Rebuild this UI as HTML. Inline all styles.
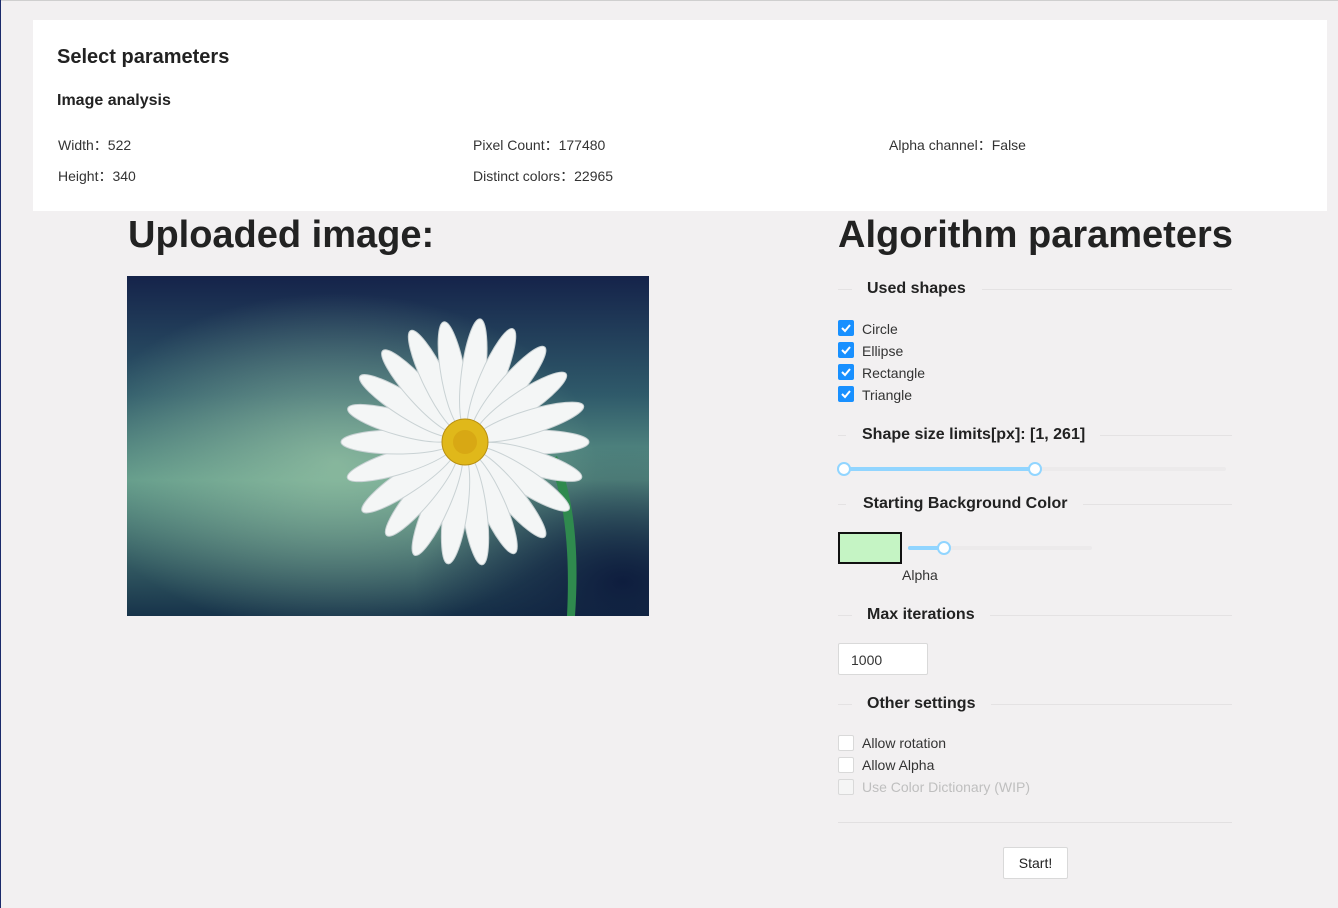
<!DOCTYPE html>
<html><head><meta charset="utf-8"><style>
*{margin:0;padding:0;box-sizing:border-box}
body{width:1338px;height:908px;background:#f2f0f1;font-family:"Liberation Sans",Arial,sans-serif;color:#222;position:relative;overflow:hidden}
.a{position:absolute;white-space:nowrap}
.card{position:absolute;left:33px;top:20px;width:1294px;height:191px;background:#fff}
.lbl{font-size:14px;color:#333}
.sec{position:absolute;left:838px;width:394px;height:20px}
.sec .ln{position:absolute;top:9px;height:1px;background:#e4e2e3}
.sec .t{position:absolute;top:0;font-size:16px;font-weight:bold;color:#222}
.cb{position:absolute;left:838px;width:16px;height:16px;border-radius:2px}
.cb.on{background:#1890ff}
.cb.off{background:#fff;border:1px solid #d9d9d9}
.cbt{position:absolute;left:862px;font-size:14px;color:#333}
</style></head><body>
<div class="a" style="left:0;top:0;width:1338px;height:1px;background:#cfcfcf"></div>
<div class="a" style="left:0;top:0;width:1px;height:908px;background:#1b2a6b"></div>
<div class="card">
<div class="a" style="left:24px;top:26px;font-size:20px;font-weight:bold">Select parameters</div>
<div class="a" style="left:24px;top:72px;font-size:16px;font-weight:bold">Image analysis</div>
<div class="a lbl" style="left:25px;top:115px">Width：522</div>
<div class="a lbl" style="left:25px;top:146px">Height：340</div>
<div class="a lbl" style="left:440px;top:115px">Pixel Count：177480</div>
<div class="a lbl" style="left:440px;top:146px">Distinct colors：22965</div>
<div class="a lbl" style="left:856px;top:115px">Alpha channel：False</div>
</div>
<div class="a" style="left:128px;top:214px;font-size:38px;font-weight:bold">Uploaded image:</div>
<div class="a" style="left:838px;top:214px;font-size:38px;font-weight:bold">Algorithm parameters</div>
<svg class="a" style="left:127px;top:276px" width="522" height="340" viewBox="0 0 522 340">
<defs>
<linearGradient id="bg" x1="0" y1="0" x2="0" y2="1">
<stop offset="0" stop-color="#15234a"/><stop offset="0.35" stop-color="#2f5a6a"/><stop offset="0.6" stop-color="#5f9888"/><stop offset="1" stop-color="#17334a"/></linearGradient>
<radialGradient id="gl" cx="0.4" cy="0.55" r="0.5"><stop offset="0" stop-color="#9cc8a8" stop-opacity="0.7"/><stop offset="1" stop-color="#9cc8a8" stop-opacity="0"/></radialGradient>
<radialGradient id="dk" cx="0.95" cy="0.9" r="0.4"><stop offset="0" stop-color="#0e1d3e"/><stop offset="1" stop-color="#0e1d3e" stop-opacity="0"/></radialGradient>
</defs>
<rect width="522" height="340" fill="url(#bg)"/>
<rect width="522" height="340" fill="url(#gl)"/>
<rect width="522" height="340" fill="url(#dk)"/>
<path d="M430 180 Q455 240 448 340 L440 340 Q445 240 422 185Z" fill="#2f8a4e"/>
<g transform="translate(338,166)" fill="#f4f6f6" stroke="#c9d2d4" stroke-width="1">
<g transform="rotate(0)"><ellipse cx="68" cy="0" rx="56" ry="12"/></g>
<g transform="rotate(17)"><ellipse cx="68" cy="0" rx="54" ry="12"/></g>
<g transform="rotate(33)"><ellipse cx="68" cy="0" rx="56" ry="12"/></g>
<g transform="rotate(50)"><ellipse cx="68" cy="0" rx="56" ry="12"/></g>
<g transform="rotate(66)"><ellipse cx="68" cy="0" rx="54" ry="12"/></g>
<g transform="rotate(82)"><ellipse cx="68" cy="0" rx="56" ry="12"/></g>
<g transform="rotate(98)"><ellipse cx="68" cy="0" rx="55" ry="12"/></g>
<g transform="rotate(114)"><ellipse cx="68" cy="0" rx="56" ry="12"/></g>
<g transform="rotate(130)"><ellipse cx="68" cy="0" rx="54" ry="12"/></g>
<g transform="rotate(146)"><ellipse cx="68" cy="0" rx="56" ry="12"/></g>
<g transform="rotate(163)"><ellipse cx="68" cy="0" rx="55" ry="12"/></g>
<g transform="rotate(180)"><ellipse cx="68" cy="0" rx="56" ry="12"/></g>
<g transform="rotate(196)"><ellipse cx="68" cy="0" rx="54" ry="12"/></g>
<g transform="rotate(212)"><ellipse cx="68" cy="0" rx="56" ry="12"/></g>
<g transform="rotate(228)"><ellipse cx="68" cy="0" rx="55" ry="12"/></g>
<g transform="rotate(244)"><ellipse cx="68" cy="0" rx="56" ry="12"/></g>
<g transform="rotate(260)"><ellipse cx="68" cy="0" rx="54" ry="12"/></g>
<g transform="rotate(277)"><ellipse cx="68" cy="0" rx="56" ry="12"/></g>
<g transform="rotate(293)"><ellipse cx="68" cy="0" rx="55" ry="12"/></g>
<g transform="rotate(310)"><ellipse cx="68" cy="0" rx="56" ry="12"/></g>
<g transform="rotate(326)"><ellipse cx="68" cy="0" rx="54" ry="12"/></g>
<g transform="rotate(343)"><ellipse cx="68" cy="0" rx="56" ry="12"/></g>
<circle r="23" fill="#e0b81a" stroke="#b88f10"/>
<circle r="12" fill="#d8a814" stroke="none"/>
</g>
</svg>

<div class="sec" style="top:280px"><div class="ln" style="left:0;width:14px"></div><div class="t" style="left:29px">Used shapes</div><div class="ln" style="left:144px;right:0"></div></div>
<div class="cb on" style="top:320px"></div><div class="cbt" style="top:321px">Circle</div>
<div class="cb on" style="top:342px"></div><div class="cbt" style="top:343px">Ellipse</div>
<div class="cb on" style="top:364px"></div><div class="cbt" style="top:365px">Rectangle</div>
<div class="cb on" style="top:386px"></div><div class="cbt" style="top:387px">Triangle</div>
<svg class="a" style="left:838px;top:320px" width="16" height="84">
<g fill="none" stroke="#fff" stroke-width="2"><path d="M4 8 L7 11 L12 5"/><path d="M4 30 L7 33 L12 27"/><path d="M4 52 L7 55 L12 49"/><path d="M4 74 L7 77 L12 71"/></g></svg>

<div class="sec" style="top:426px"><div class="ln" style="left:0;width:8px"></div><div class="t" style="left:24px">Shape size limits[px]: [1, 261]</div><div class="ln" style="left:262px;right:0"></div></div>
<div class="a" style="left:844px;top:467px;width:382px;height:4px;background:#eceaeb;border-radius:2px"></div>
<div class="a" style="left:844px;top:467px;width:191px;height:4px;background:#91d5ff;border-radius:2px"></div>
<div class="a" style="left:837px;top:462px;width:14px;height:14px;border:2px solid #91d5ff;background:#fff;border-radius:50%"></div>
<div class="a" style="left:1028px;top:462px;width:14px;height:14px;border:2px solid #91d5ff;background:#fff;border-radius:50%"></div>

<div class="sec" style="top:495px"><div class="ln" style="left:0;width:8px"></div><div class="t" style="left:25px">Starting Background Color</div><div class="ln" style="left:245px;right:0"></div></div>
<div class="a" style="left:838px;top:532px;width:64px;height:32px;background:#c5f4c4;border:2px solid #111"></div>
<div class="a" style="left:908px;top:546px;width:184px;height:4px;background:#eceaeb;border-radius:2px"></div>
<div class="a" style="left:908px;top:546px;width:36px;height:4px;background:#91d5ff;border-radius:2px"></div>
<div class="a" style="left:937px;top:541px;width:14px;height:14px;border:2px solid #91d5ff;background:#fff;border-radius:50%"></div>
<div class="a" style="left:902px;top:567px;font-size:14px;color:#333">Alpha</div>

<div class="sec" style="top:606px"><div class="ln" style="left:0;width:14px"></div><div class="t" style="left:29px">Max iterations</div><div class="ln" style="left:152px;right:0"></div></div>
<div class="a" style="left:838px;top:643px;width:90px;height:32px;background:#fff;border:1px solid #d9d9d9;border-radius:2px;font-size:14px;padding:8px 0 0 12px;color:#333">1000</div>

<div class="sec" style="top:695px"><div class="ln" style="left:0;width:14px"></div><div class="t" style="left:29px">Other settings</div><div class="ln" style="left:153px;right:0"></div></div>
<div class="cb off" style="top:735px"></div><div class="cbt" style="top:735px">Allow rotation</div>
<div class="cb off" style="top:757px"></div><div class="cbt" style="top:757px">Allow Alpha</div>
<div class="cb off" style="top:779px;background:#f5f5f5"></div><div class="cbt" style="top:779px;color:#bfbfbf">Use Color Dictionary (WIP)</div>
<div class="a" style="left:838px;top:822px;width:394px;height:1px;background:#e2e0e1"></div>
<div class="a" style="left:1003px;top:847px;width:65px;height:32px;background:#fff;border:1px solid #d9d9d9;border-radius:2px;font-size:14px;text-align:center;line-height:30px;color:#222">Start!</div>
</body></html>
